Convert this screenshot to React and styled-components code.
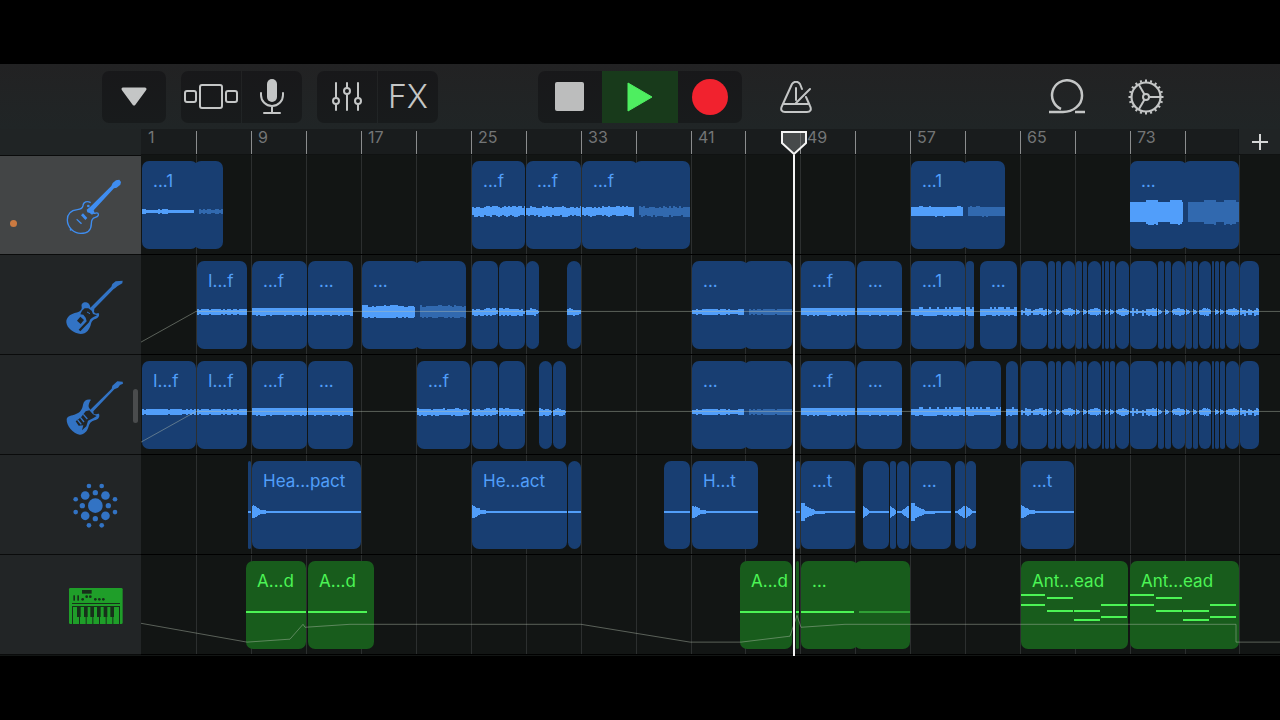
import React, { useState } from "react";
import styled, { createGlobalStyle, css } from "styled-components";

const GlobalStyle = createGlobalStyle`
  * {
    box-sizing: border-box;
  }
  body {
    margin: 0;
    background: #000;
    font-family: Inter, "Liberation Sans", sans-serif;
  }
  button {
    padding: 0;
    border: none;
    font: inherit;
    color: inherit;
    background: none;
    cursor: pointer;
  }
`;

// one lane is split in this many equal columns
const UNITS = 1139;
const STEP = 54.95;
const CLIP_HEIGHT = 88;

const Page = styled.div`
  min-height: 100vh;
  padding: 64px 0;
  background: #000;
`;

/* ---------- toolbar ---------- */

const Toolbar = styled.header`
  display: flex;
  align-items: center;
  height: 65px;
  padding: 0 106px 0 102px;
  color: #c4c6c6;
  background: linear-gradient(#222223, #202526);
`;
const Group = styled.div`
  display: flex;
  gap: 1px;
  height: 52px;
  margin-right: 15px;
  border-radius: 7px;
  overflow: hidden;
`;
const Transport = styled(Group)`
  gap: 0;
  margin: 0 26px 0 85px;
`;
const ToolButton = styled.button`
  display: flex;
  align-items: center;
  justify-content: center;
  width: ${(props) => (props.$wide ? "64px" : "60px")};
  background: linear-gradient(#18181a, #181b1c);
`;
const PlayButton = styled(ToolButton)`
  width: 76px;
  background: #183a1b;
`;
const PlainButton = styled(ToolButton)`
  width: 56px;
  height: 52px;
  background: none;
`;
const RightTools = styled.div`
  display: flex;
  gap: 23px;
  margin-left: auto;
`;
const FxText = styled.span`
  font-size: 32px;
  font-weight: 300;
  line-height: 40px;
`;

/* ---------- workspace ---------- */

const Workspace = styled.main`
  display: grid;
  grid-template-columns: 141px minmax(0, 1fr);
  padding-bottom: 1px;
  background: #121514;
`;
const TrackList = styled.div`
  position: relative;
  background: #222526;
`;
const RulerCorner = styled.div`
  height: 26px;
  background: #202425;
`;
const TrackHeader = styled.button`
  display: flex;
  align-items: center;
  justify-content: flex-end;
  width: 100%;
  height: 100px;
  padding-right: 16px;
  border-bottom: 1px solid #0a0b0b;
  color: ${(props) => (props.$color === "green" ? "#1f9e29" : "#3273c4")};
  background: #222526;
  ${(props) =>
    props.$selected &&
    css`
      color: #3f8df0;
      background: #434546;
      border-top: 1px solid #0a0b0b;
    `}
`;
const StatusDot = styled.span`
  width: 7px;
  height: 7px;
  margin: 36px auto 0 10px;
  border-radius: 50%;
  background: #cb7a41;
`;
const ScrollHandle = styled.div`
  position: absolute;
  top: 260px;
  right: 3px;
  width: 5px;
  height: 34px;
  border-radius: 3px;
  background: #4a4c4d;
`;

const Timeline = styled.div`
  position: relative;
`;
const columns = css`
  display: grid;
  grid-template-columns: repeat(${UNITS}, minmax(0, 1fr));
`;
const Ruler = styled.div`
  ${columns}
  height: 26px;
  padding-top: 2px;
  background: #191c1d;
  border-bottom: 1px solid #101212;
`;
const Tick = styled.div`
  grid-row: 1;
  padding-left: 6px;
  border-left: 1px solid ${(props) => (props.$first ? "transparent" : "#8b8d8e")};
  color: #737576;
  font-size: 16px;
  line-height: 12px;
`;
const AddButton = styled.button`
  grid-row: 1;
  display: flex;
  align-items: center;
  justify-content: center;
  margin-top: -2px;
  border-left: 1px solid #15181a;
  color: #d4d6d6;
  background: #202425;
`;
const GridLines = styled.div`
  ${columns}
  position: absolute;
  inset: 26px 0 0;
`;
const GridLine = styled.i`
  grid-row: 1;
  border-left: 1px solid #2c2f2f;
`;
const Lane = styled.div`
  ${columns}
  position: relative;
  height: 100px;
  padding: 6px 0 5px;
  border-bottom: 1px solid #000;
`;
const ClipBox = styled.div`
  grid-row: 1;
  display: grid;
  grid-template: ${CLIP_HEIGHT}px / minmax(0, 1fr);
  border-radius: 7px;
  overflow: hidden;
  color: ${(props) => (props.$color === "green" ? "#4cf455" : "#519efa")};
  background: ${(props) => (props.$color === "green" ? "#185c1c" : "#183e72")};
`;
const ClipLabel = styled.span`
  grid-area: 1 / 1;
  padding: 10px 0 0 11px;
  font-size: 17px;
  line-height: 20px;
  white-space: nowrap;
`;
const ClipArt = styled.svg`
  grid-area: 1 / 1;
  display: block;
  width: 100%;
  height: 100%;
  fill: currentColor;
  opacity: ${(props) => (props.$dim ? 0.45 : 1)};
`;
const Automation = styled.svg`
  position: absolute;
  inset: 0;
  width: 100%;
  height: 100%;
  fill: none;
  stroke: rgba(180, 190, 175, 0.45);
`;
const Playhead = styled.div`
  position: absolute;
  top: 1px;
  bottom: -1px;
  width: 26px;
  margin-left: -13px;
  display: flex;
  flex-direction: column;
  align-items: center;
  pointer-events: none;
`;
const PlayheadLine = styled.div`
  flex: 1;
  width: 2px;
  background: #f4f4f4;
`;

/* ---------- wave forms ---------- */

const random = (seed) => {
  let s = seed * 9301 + 49297;
  return () => {
    s = (s * 1103515245 + 12345) % 2147483648;
    return s / 2147483648;
  };
};

// every shape returns [height above, height below] the middle line
const shapes = {
  thin: (x, w, r) => (x < 4 || (x > 14 && x < 26 && r() > 0.3) ? [3, 2] : [2, 1]),
  fuzz: (x, w, r) => (r() > 0.4 ? [3, 2] : [2, 1]),
  riff: (x, w, r) => [4 + r() * 2, 3 + r() * 2],
  pulse: (x, w, r) => (r() > 0.25 ? [3, 3] : [2, 2]),
  flat: (x, w, r) => [4, r() > 0.7 ? 4 : 3],
  loud: (x, w, r) => [5 + r() * 2, 5 + r() * 1.5],
  block: (x, w, r) => [r() > 0.85 ? 6 : 5, r() > 0.9 ? 5 : 4],
  huge: (x, w, r) => {
    const swell = x > 14 && x < 27 ? 12 : x > w - 17 && x < w - 3 ? 12 : 10;
    return [swell, swell + (swell > 10 && r() > 0.7 ? 1 : 0)];
  },
  comb: (x, w, r) => [r() > 0.5 ? 5 : 3, 3 + r()],
  tail: (x, w, r) => {
    const end = Math.min(1, (w - x) / 4);
    return [(2 + r() * 2) * end, (3 + r()) * end];
  },
  chop: (x, w, r) => (r() > 0.2 ? [2 + r() * 2, 2 + r() * 2] : [1, 1]),
  blob: (x, w, r) => {
    const h = 1 + 2 * Math.sin((Math.PI * (x + 1)) / (w + 2));
    return [h + r(), h + r()];
  },
  dart: (x, w) => {
    const h = Math.max(0, 3 - x * 0.7);
    return [h, h];
  },
  hit: (x, w, r) => {
    const h = x < 8 ? 6 - x * 0.5 : x < 14 ? 2 : 1;
    return [h + (x < 8 ? r() * 1.5 : 0), h + (x < 8 ? r() : 0)];
  },
  bigHit: (x) => {
    const h = x < 4 ? 9 : x < 14 ? 8 - x * 0.45 : x < 24 ? 1.5 : 1;
    return [h, h];
  },
  drop: (x) => [Math.max(1, 6 - x * 0.8), Math.max(1, 6 - x * 0.8)],
  rise: (x, w) => {
    const h = Math.max(1, 7 - (w - x) * 0.7);
    return [h, h];
  },
  line: () => [1, 1],
};

const wavePath = (kind, from, to, seed, mid) => {
  const r = random(seed);
  const fine = ["dart", "drop", "rise", "blob", "hit", "bigHit"].includes(kind);
  const step = fine ? 1 : 2;
  let d = "";
  for (let x = from; x < to; x += step) {
    const [up, down] = shapes[kind](x - from, to - from, r);
    if (up + down > 0.5) {
      d += `M${x} ${mid - up}H${Math.min(x + step, to)}V${mid + down}H${x}Z`;
    }
  }
  return d;
};

const antNotes = [
  [0, 33, 24],
  [0, 43, 24],
  [26, 36, 26],
  [26, 49, 26],
  [53, 49, 26],
  [53, 58, 26],
  [80, 43, 26],
  [80, 55, 26],
];

const Clip = ({ clip, color }) => {
  const { start, end, label, wave, loop, notes } = clip;
  const width = end - start;
  return (
    <ClipBox $color={color} style={{ gridColumn: `${start + 1} / ${end + 1}` }}>
      <ClipArt
        viewBox={`0 0 ${width} ${CLIP_HEIGHT}`}
        preserveAspectRatio="none"
        shapeRendering="crispEdges"
        $dim={loop}
        aria-hidden="true"
      >
        {notes
          ? notes.map(([x, y, w], i) => (
              <rect key={i} x={x} y={y} width={w} height="2" />
            ))
          : wave && (
              <path
                d={wavePath(wave, loop ? 5 : 0, clip.waveEnd || width, start, 51)}
              />
            )}
      </ClipArt>
      {label && <ClipLabel>{label}</ClipLabel>}
    </ClipBox>
  );
};

/* ---------- data ---------- */

const c = (start, end, wave, label, extra) => ({
  start,
  end,
  wave,
  label,
  ...extra,
});
const loop = { loop: true };
const beforeSeam = (waveEnd) => ({ waveEnd });

const stutter = [
  c(880, 906, "chop"),
  c(907, 914, "dart"),
  c(915, 920, "dart"),
  c(921, 934, "blob"),
  c(935, 941, "dart"),
  c(942, 946, "dart"),
  c(947, 960, "blob"),
  c(961, 963),
  c(964, 968, "dart"),
  c(969, 974, "dart"),
  c(975, 988, "blob"),
  c(989, 1016, "chop"),
  c(1017, 1023, "dart"),
  c(1024, 1030, "dart"),
  c(1031, 1044, "blob"),
  c(1045, 1051, "dart"),
  c(1052, 1057, "dart"),
  c(1058, 1070, "blob"),
  c(1071, 1073),
  c(1074, 1078, "dart"),
  c(1079, 1084, "dart"),
  c(1085, 1098, "blob"),
  c(1099, 1118, "chop"),
];

const tracks = [
  {
    name: "Lead guitar",
    icon: "lesPaul",
    clips: [
      c(1, 57, "thin", "...1", beforeSeam(54)),
      c(53, 82, "fuzz", null, loop),
      c(331, 384, "riff", "...f"),
      c(385, 440, "riff", "...f"),
      c(441, 497, "riff", "...f", beforeSeam(54)),
      c(493, 549, "riff", null, loop),
      c(770, 826, "block", "...1", beforeSeam(54)),
      c(822, 864, "block", null, loop),
      c(989, 1046, "huge", "...", beforeSeam(55)),
      c(1042, 1098, "huge", null, loop),
    ],
  },
  {
    name: "Rhythm guitar",
    icon: "tele",
    line: "0,88 55,57 1139,57",
    clips: [
      c(56, 106, "pulse", "I...f"),
      c(111, 166, "flat", "...f"),
      c(167, 212, "flat", "..."),
      c(221, 278, "loud", "...", beforeSeam(54)),
      c(274, 325, "loud", null, loop),
      c(331, 357, "tail"),
      c(358, 384, "tail"),
      c(385, 398, "tail"),
      c(426, 440, "tail"),
      c(551, 607, "pulse", "...", beforeSeam(53)),
      c(603, 651, "pulse", null, loop),
      c(660, 714, "flat", "...f"),
      c(716, 761, "flat", "..."),
      c(770, 824, "comb", "...1"),
      c(825, 833, "comb"),
      c(839, 876, "comb", "..."),
      ...stutter,
    ],
  },
  {
    name: "Second guitar",
    icon: "strat",
    line: "0,88 55,57 1139,57",
    clips: [
      c(1, 55, "pulse", "I...f"),
      c(56, 106, "pulse", "I...f"),
      c(111, 166, "flat", "...f"),
      c(167, 212, "flat", "..."),
      c(276, 329, "tail", "...f"),
      c(331, 357, "tail"),
      c(358, 384, "tail"),
      c(398, 411, "tail"),
      c(412, 425, "tail"),
      c(551, 607, "pulse", "...", beforeSeam(53)),
      c(603, 651, "pulse", null, loop),
      c(660, 714, "flat", "...f"),
      c(716, 761, "flat", "..."),
      c(770, 824, "comb", "...1"),
      c(825, 860, "comb"),
      c(865, 877, "comb"),
      ...stutter,
    ],
  },
  {
    name: "Impacts",
    icon: "dots",
    clips: [
      c(107, 110, "line"),
      c(111, 220, "hit", "Hea...pact"),
      c(331, 426, "hit", "He...act"),
      c(427, 440, "line"),
      c(523, 549, "line"),
      c(551, 617, "hit", "H...t"),
      c(655, 659, "line"),
      c(660, 714, "bigHit", "...t"),
      c(722, 748, "drop"),
      c(749, 755, "drop"),
      c(756, 768, "rise"),
      c(770, 810, "bigHit", "..."),
      c(814, 824, "rise"),
      c(825, 835, "drop"),
      c(880, 933, "hit", "...t"),
    ],
  },
  {
    name: "Keyboard",
    icon: "keys",
    color: "green",
    line: "0,69 106,88 149,85 162,70 164,73 209,70 440,70 549,88 600,88 649,82 656,61 660,73 704,70 1095,70 1095,88 1139,88",
    clips: [
      c(105, 165, "line", "A...d"),
      c(167, 233, "line", "A...d", beforeSeam(59)),
      c(599, 651, "line", "A...d"),
      c(655, 658, "line"),
      c(660, 717, "line", "...", beforeSeam(54)),
      c(713, 769, "line", null, loop),
      c(880, 987, null, "Ant...ead", { notes: antNotes }),
      c(989, 1098, null, "Ant...ead", { notes: antNotes }),
    ],
  },
];

/* ---------- icons ---------- */

const LesPaul = () => (
  <svg width="60" height="60" viewBox="195 75 180 180" fill="currentColor">
    <path
      d="M272 158C262 152 250 155 249 167C248 176 242 178 232 179C213 181 202 193 202 210C202 232 222 250 242 250C263 250 274 239 274 221C274 209 277 204 286 202C295 200 297 194 294 190C289 186 286 192 280 190"
      fill="none"
      stroke="currentColor"
      strokeWidth="4"
    />
    <path d="M260 179L271 170L334 108L338 99L348 91L358 89L363 96L361 104L350 113L342 115L281 181L284 188L276 194L269 189L262 187Z" />
    <path d="M249 190L262 204L256 210L243 196Z" />
    <path d="M231 206L246 220L243 223L229 209Z" />
    <circle cx="265" cy="168" r="4" />
    <circle cx="212" cy="239" r="3" />
  </svg>
);

const Tele = () => (
  <svg width="60" height="60" viewBox="195 375 180 180" fill="currentColor">
    <path d="M245 470C243 461 250 456 258 457C267 458 270 466 271 473L334 410L337 402L347 394L368 392L367 400L352 409L345 415L341 417L283 476L282 486C287 492 291 491 295 489C300 493 297 503 288 506C278 508 275 514 273 521C270 537 259 552 242 552C221 551 200 534 199 517C198 500 214 491 227 488C238 486 247 480 245 470Z" />
    <g fill="#222526">
      <path d="M246 482L254 475L265 475L275 482L279 492L291 496L279 502L271 508L267 517L241 544L236 539L260 514L257 503L250 494L241 493Z" />
      <path d="M241 500L252 510L242 522L231 512Z" />
    </g>
    <path d="M261 486L270 491" stroke="currentColor" strokeWidth="3" />
  </svg>
);

const Strat = () => (
  <svg width="60" height="60" viewBox="195 75 180 180" fill="currentColor">
    <path d="M249 164C251 151 262 146 273 149C268 156 265 164 266 171L271 179L335 116L337 107L352 94L368 95L369 101L360 105L354 113L343 118L280 184L281 191C287 195 291 191 297 191C301 203 293 208 284 211C272 215 269 220 266 229C262 245 251 255 239 254C219 251 199 228 200 207C203 197 214 198 228 192C242 186 247 177 249 164Z" />
    <path
      d="M257 184L268 181L279 193L290 198L279 205L264 212L259 229L246 241L250 226L236 227L227 214L243 202Z"
      fill="#222526"
    />
    <path
      d="M233 210L244 223M241 202L252 216M250 193L262 207"
      stroke="currentColor"
      strokeWidth="4"
    />
  </svg>
);

const Dots = () => {
  const at = (r, deg) => [
    286 + r * Math.cos((deg * Math.PI) / 180),
    467 + r * Math.sin((deg * Math.PI) / 180),
  ];
  const ring = (radius, size, angles) =>
    angles.map((deg) => {
      const [x, y] = at(radius, deg);
      return <circle key={`${radius}-${deg}`} cx={x} cy={y} r={size} />;
    });
  return (
    <svg width="60" height="60" viewBox="195 375 180 180" fill="currentColor">
      <circle cx="286" cy="467" r="22" />
      {ring(39, 8, [0, 90, 180, 270])}
      {ring(43, 13, [45, 135, 225, 315])}
      {ring(62, 7, [18, 72, 108, 162, 198, 252, 288, 342])}
    </svg>
  );
};

const Keys = () => (
  <svg width="60" height="60" viewBox="195 675 180 180" fill="currentColor">
    <rect x="207" y="714" width="161" height="108" rx="4" />
    <g fill="#17301a">
      <rect x="246" y="720" width="29" height="11" />
      <rect x="220" y="736" width="5" height="16" />
      <rect x="232" y="736" width="5" height="16" />
      <circle cx="248" cy="748" r="4" />
      <circle cx="260" cy="740" r="4" />
      <circle cx="271" cy="740" r="4" />
      <circle cx="286" cy="748" r="4" />
      <circle cx="298" cy="748" r="4" />
      <circle cx="310" cy="748" r="4" />
      <rect x="216" y="759" width="144" height="3" />
      <rect x="216" y="768" width="144" height="3" />
      {[216, 237, 257, 277, 297, 317, 337, 357].map((x) => (
        <rect key={x} x={x} y="768" width="3" height="54" />
      ))}
      {[231, 252, 271, 311, 331].map((x) => (
        <rect key={x} x={x} y="768" width="11" height="33" />
      ))}
      <rect x="291" y="768" width="11" height="33" />
    </g>
  </svg>
);

const icons = {
  lesPaul: <LesPaul />,
  tele: <Tele />,
  strat: <Strat />,
  dots: <Dots />,
  keys: <Keys />,
};

const BrowserIcon = () => (
  <svg width="54" height="26" viewBox="0 0 54 26" fill="none" stroke="currentColor" strokeWidth="2">
    <rect x="1" y="7" width="11" height="11" rx="2" />
    <rect x="16" y="1" width="22" height="23" rx="2" />
    <rect x="42" y="7" width="11" height="11" rx="2" />
  </svg>
);

const MicIcon = () => (
  <svg width="24" height="36" viewBox="0 0 24 36" fill="none" stroke="currentColor" strokeWidth="2" strokeLinecap="round">
    <rect x="7" y="0" width="10" height="23" rx="5" fill="currentColor" stroke="none" />
    <path d="M1 14V16A11 11 0 0 0 23 16V14M12 27V34M4 34H20" />
  </svg>
);

const SlidersIcon = () => (
  <svg width="30" height="30" viewBox="0 0 30 30" fill="none" stroke="currentColor" strokeWidth="2" strokeLinecap="round">
    <path d="M4 1V16M4 23V28M15 1V6M15 13V28M26 1V16M26 23V28" />
    <circle cx="4" cy="19" r="3" />
    <circle cx="15" cy="9" r="3" />
    <circle cx="26" cy="19" r="3" />
  </svg>
);

const MetronomeIcon = () => (
  <svg width="32" height="32" viewBox="0 0 32 32" fill="none" stroke="currentColor" strokeWidth="2" strokeLinecap="round" strokeLinejoin="round">
    <path d="M22 8L20 3C18 0 14 0 12 3L2 25C0 29 2 31 5 31H27C30 31 32 29 30 25L26 16" />
    <path d="M4 23H28M16 7V19M16 22L30 8" />
  </svg>
);

const LoopIcon = () => (
  <svg width="38" height="36" viewBox="0 0 38 36" fill="none" stroke="currentColor" strokeWidth="2">
    <path d="M1 33H15C25 33 34 26 34 17A15 15 0 1 0 13 30" strokeWidth="2.5" />
    <path d="M27 33H37" strokeWidth="2.5" />
  </svg>
);

const GearIcon = () => (
  <svg width="36" height="36" viewBox="-18 -18 36 36" fill="none" stroke="currentColor" strokeWidth="2">
    <circle r="14.5" strokeWidth="2.2" />
    <circle r="3" />
    {[0, 120, 240].map((a) => (
      <path key={a} d="M3 0H14" transform={`rotate(${a})`} />
    ))}
    {Array.from({ length: 20 }, (_, i) => (
      <path key={i} d="M15 0H17.5" transform={`rotate(${i * 18})`} />
    ))}
  </svg>
);

const App = () => {
  const [selected, setSelected] = useState(0);
  const ticks = Array.from({ length: 20 }, (_, i) => Math.round(i * STEP));

  return (
    <Page>
      <GlobalStyle />
      <Toolbar>
        <Group>
          <ToolButton $wide aria-label="Menu">
            <svg width="28" height="20" viewBox="0 0 28 20">
              <path
                d="M3 2H25L14 17Z"
                fill="currentColor"
                stroke="currentColor"
                strokeWidth="3"
                strokeLinejoin="round"
              />
            </svg>
          </ToolButton>
        </Group>
        <Group>
          <ToolButton aria-label="Browser">
            <BrowserIcon />
          </ToolButton>
          <ToolButton aria-label="Microphone">
            <MicIcon />
          </ToolButton>
        </Group>
        <Group>
          <ToolButton aria-label="Track controls">
            <SlidersIcon />
          </ToolButton>
          <ToolButton>
            <FxText>FX</FxText>
          </ToolButton>
        </Group>
        <Transport>
          <ToolButton $wide aria-label="Stop">
            <svg width="30" height="30" viewBox="0 0 30 30">
              <rect width="29" height="29" rx="2" fill="#bcbdbd" />
            </svg>
          </ToolButton>
          <PlayButton aria-label="Play">
            <svg width="26" height="32" viewBox="0 0 26 32">
              <path
                d="M1 2V30L25 16Z"
                fill="#4eee60"
                stroke="#4eee60"
                strokeWidth="1"
                strokeLinejoin="round"
              />
            </svg>
          </PlayButton>
          <ToolButton $wide aria-label="Record">
            <svg width="36" height="36" viewBox="0 0 36 36">
              <circle cx="18" cy="18" r="18" fill="#f1222e" />
            </svg>
          </ToolButton>
        </Transport>
        <PlainButton aria-label="Metronome">
          <MetronomeIcon />
        </PlainButton>
        <RightTools>
          <PlainButton aria-label="Loops">
            <LoopIcon />
          </PlainButton>
          <PlainButton aria-label="Settings">
            <GearIcon />
          </PlainButton>
        </RightTools>
      </Toolbar>

      <Workspace>
        <TrackList>
          <RulerCorner />
          {tracks.map((track, i) => (
            <TrackHeader
              key={track.name}
              aria-label={track.name}
              $color={track.color}
              $selected={i === selected}
              onClick={() => setSelected(i)}
            >
              {i === 0 && <StatusDot />}
              {icons[track.icon]}
            </TrackHeader>
          ))}
          <ScrollHandle />
        </TrackList>

        <Timeline>
          <Ruler>
            {ticks.map((x, i) => (
              <Tick
                key={x}
                $first={i === 0}
                style={{ gridColumn: `${x + 1} / span 50` }}
              >
                {i % 2 === 0 && i * 4 + 1}
              </Tick>
            ))}
            <AddButton
              aria-label="Add section"
              style={{ gridColumn: `1098 / ${UNITS + 1}` }}
            >
              <svg width="16" height="16" viewBox="0 0 16 16">
                <path d="M8 0V16M0 8H16" stroke="currentColor" strokeWidth="2" />
              </svg>
            </AddButton>
          </Ruler>
          <GridLines>
            {[...ticks.slice(1), 1098].map((x) => (
              <GridLine key={x} style={{ gridColumn: `${x + 1} / span 1` }} />
            ))}
          </GridLines>
          {tracks.map((track) => (
            <Lane key={track.name}>
              {track.clips.map((clip) => (
                <Clip key={clip.start} clip={clip} color={track.color} />
              ))}
              {track.line && (
                <Automation
                  viewBox={`0 0 ${UNITS} 100`}
                  preserveAspectRatio="none"
                >
                  <polyline points={track.line} />
                </Automation>
              )}
            </Lane>
          ))}
          <Playhead style={{ left: `${(653 / UNITS) * 100}%` }}>
            <svg width="26" height="25" viewBox="0 0 26 25">
              <path
                d="M1 2H25V13L13 24L1 13Z"
                fill="rgba(90, 92, 94, 0.7)"
                stroke="#f4f4f4"
                strokeWidth="2"
              />
            </svg>
            <PlayheadLine />
          </Playhead>
        </Timeline>
      </Workspace>
    </Page>
  );
};

export default App;
